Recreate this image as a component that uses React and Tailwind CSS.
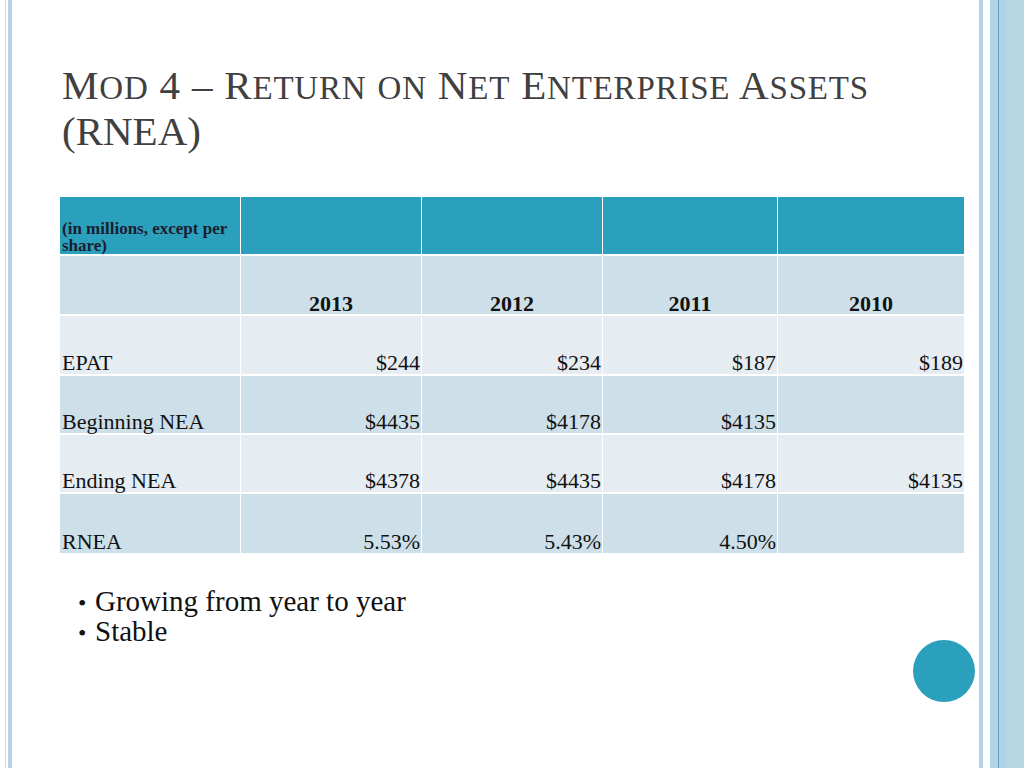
import React from "react";

const serif = "font-['Liberation_Serif','Times_New_Roman',serif]";

const cols = "grid grid-cols-[180px_180px_180px_174px_186px] gap-x-[1px] gap-y-[2px]";

const rows = [
  { label: "EPAT", vals: ["$244", "$234", "$187", "$189"], bg: "bg-[#e5ecf2]", h: "h-[58px]" },
  { label: "Beginning NEA", vals: ["$4435", "$4178", "$4135", ""], bg: "bg-[#cddfe8]", h: "h-[57px]" },
  { label: "Ending NEA", vals: ["$4378", "$4435", "$4178", "$4135"], bg: "bg-[#e5ecf2]", h: "h-[57px]" },
  { label: "RNEA", vals: ["5.53%", "5.43%", "4.50%", ""], bg: "bg-[#cddfe8]", h: "h-[59px]" },
];

function S({ children }) {
  return <span className="text-[33px] leading-none">{children}</span>;
}

export default function App() {
  return (
    <div className={`w-[1024px] h-[768px] flex bg-white overflow-hidden ${serif}`}>
      {/* left frame */}
      <div className="w-[5px] shrink-0" />
      <div className="w-[1px] shrink-0 bg-[#c4dde9]" />
      <div className="w-[2px] shrink-0" />
      <div className="w-[4px] shrink-0 bg-[#b5d4e4]" />

      {/* content */}
      <div className="flex-1 flex flex-col">
        <h1 className="mt-[62px] ml-[50px] text-[41px] leading-[46px] text-[#404040] font-normal tracking-[0.8px]">
          M<S>OD</S> 4 – R<S>ETURN</S> <S>ON</S> N<S>ET</S> E<S>NTERPRISE</S> A<S>SSETS</S>
          <br />
          <span className="tracking-normal">(RNEA)</span>
        </h1>

        <div className={`mt-[43px] ml-[48px] ${cols}`}>
          <div className="h-[57px] bg-[#2ba0bd] flex items-end pl-[2px]">
            <span className="text-[17px] leading-[17px] font-bold text-[#1b1d2e]">
              (in millions, except per share)
            </span>
          </div>
          <div className="h-[57px] bg-[#2ba0bd]" />
          <div className="h-[57px] bg-[#2ba0bd]" />
          <div className="h-[57px] bg-[#2ba0bd]" />
          <div className="h-[57px] bg-[#2ba0bd]" />

          <div className="h-[58px] bg-[#cddfe8]" />
          {["2013", "2012", "2011", "2010"].map((y) => (
            <div key={y} className="h-[58px] bg-[#cddfe8] flex items-end justify-center">
              <span className="text-[22px] leading-[20px] font-bold text-[#111]">{y}</span>
            </div>
          ))}

          {rows.map((r) => (
            <React.Fragment key={r.label}>
              <div className={`${r.h} ${r.bg} flex items-end pl-[2px]`}>
                <span className="text-[22px] leading-[22px] text-[#111]">{r.label}</span>
              </div>
              {r.vals.map((v, i) => (
                <div key={i} className={`${r.h} ${r.bg} flex items-end justify-end pr-[1px]`}>
                  <span className="text-[22px] leading-[22px] text-[#111]">{v}</span>
                </div>
              ))}
            </React.Fragment>
          ))}
        </div>

        <div className="flex items-start justify-between">
          <ul className="mt-[33px] ml-[66px] text-[29px] leading-[31px] text-[#111]">
            <li className="flex items-baseline h-[30px]">
              <span className="w-[17px] shrink-0 text-[24px] leading-none">•</span>
              <span>Growing from year to year</span>
            </li>
            <li className="flex items-baseline h-[30px]">
              <span className="w-[17px] shrink-0 text-[24px] leading-none">•</span>
              <span>Stable</span>
            </li>
          </ul>
          <div className="mt-[87px] mr-[4px] w-[62px] h-[62px] rounded-full bg-[#2ba0bd]" />
        </div>
      </div>

      {/* right frame */}
      <div className="w-[4px] shrink-0 bg-[#b5d4e4]" />
      <div className="w-[7px] shrink-0" />
      <div className="w-[8px] shrink-0 bg-[#b0d4e4]" />
      <div className="w-[1px] shrink-0 bg-[#5f9cc4]" />
      <div className="w-[8px] shrink-0 bg-[#b0d4e4]" />
      <div className="w-[17px] shrink-0 bg-[#b9d7e3]" />
    </div>
  );
}
